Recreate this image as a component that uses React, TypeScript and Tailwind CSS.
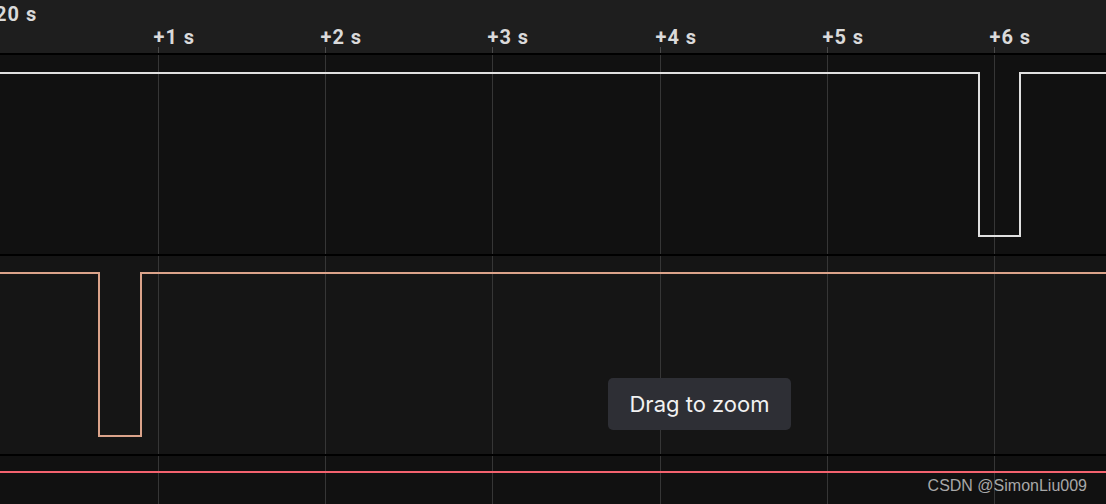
import React from "react";

// tick positions of the time axis (x in px)
const ticks = [1, 2, 3, 4, 5, 6].map((k) => ({
  label: `+${k} s`,
  x: Math.round(158 + 167.2 * (k - 1)) + 0.5,
}));

const GridLines: React.FC<{ height: number; top?: number }> = ({ height, top = 0 }) => (
  <>
    {ticks.map((t) => (
      <line key={t.label} x1={t.x} x2={t.x} y1={top} y2={height} stroke="#363636" strokeWidth={1} />
    ))}
  </>
);

const Panel: React.FC<{
  height: number;
  bg: string;
  color: string;
  points: string;
}> = ({ height, bg, color, points }) => (
  <div className={`w-full shrink-0 ${bg}`} style={{ height }}>
    <svg width={1106} height={height} className="block">
      <GridLines height={height} />
      <polyline points={points} fill="none" stroke={color} strokeWidth={2} />
    </svg>
  </div>
);

const App: React.FC = () => {
  return (
    <div className="relative w-[1106px] h-[504px] overflow-hidden bg-black flex flex-col gap-[2px]">
      {/* Time axis header */}
      <div className="h-[53px] shrink-0 bg-[#1e1e1e]">
        <svg width={1106} height={53} className="block" style={{ fontFamily: "Roboto, sans-serif" }}>
          <text x={-5} y={21} fill="#dadada" fontSize={20} fontWeight={700} letterSpacing={1}>
            20 s
          </text>
          {ticks.map((t) => (
            <g key={t.label}>
              <text x={t.x - 5} y={44} fill="#dadada" fontSize={20} fontWeight={700} letterSpacing={1}>
                {t.label}
              </text>
              <line x1={t.x} x2={t.x} y1={47} y2={53} stroke="#4a4a4a" strokeWidth={1} />
            </g>
          ))}
        </svg>
      </div>

      {/* Signal 1 */}
      <Panel
        height={199}
        bg="bg-[#111111]"
        color="#e0e0e0"
        points="-5,18 979,18 979,181 1020,181 1020,18 1111,18"
      />

      {/* Signal 2 */}
      <Panel
        height={198}
        bg="bg-[#151515]"
        color="#dba38a"
        points="-5,17 99,17 99,180 141,180 141,17 1111,17"
      />

      {/* Signal 3 */}
      <Panel height={60} bg="bg-[#111111]" color="#f4636f" points="-5,16 1111,16" />

      {/* Drag hint */}
      <div className="absolute left-[608px] top-[378px] w-[183px] h-[52px] rounded-[5px] bg-[#2e2f35] flex items-center justify-center">
        <span className="text-[22px] text-[#f2f2f2] font-['Inter',sans-serif] leading-none">
          Drag to zoom
        </span>
      </div>

      {/* Watermark */}
      <div className="absolute right-[19px] top-[478px] text-[16px] leading-none text-[#a8a8a8] font-['Liberation_Sans',Arial,sans-serif]">
        CSDN @SimonLiu009
      </div>
    </div>
  );
};

export default App;
